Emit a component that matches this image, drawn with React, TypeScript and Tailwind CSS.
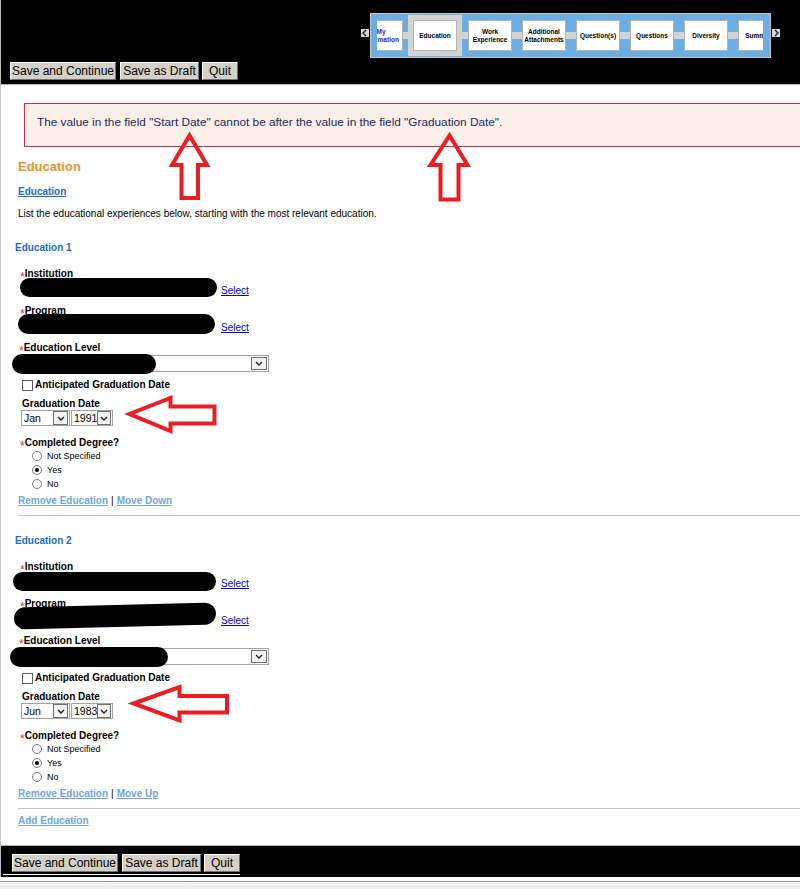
import React from 'react'

type Step = { label: string; active?: boolean; blue?: boolean }

const steps: Step[] = [
  { label: 'My Information', blue: true },
  { label: 'Education', active: true },
  { label: 'Work Experience' },
  { label: 'Additional Attachments' },
  { label: 'Question(s)' },
  { label: 'Questions' },
  { label: 'Diversity' },
  { label: 'Summary' },
]

type EducationEntry = {
  title: string
  month: string
  year: string
  moveLabel: string
  institutionBlob: string
  programBlob: string
  levelBlob: string
}

// the black marker strokes are the redacted answers
const entries: EducationEntry[] = [
  {
    title: 'Education 1',
    month: 'Jan',
    year: '1991',
    moveLabel: 'Move Down',
    institutionBlob: 'ml-[19px] -mt-[2px] h-[19px] w-[197px]',
    programBlob: 'ml-[17px] -mt-[3px] h-[20px] w-[197px]',
    levelBlob: 'left-[-9px] top-[-2px] h-[20px] w-[144px]',
  },
  {
    title: 'Education 2',
    month: 'Jun',
    year: '1983',
    moveLabel: 'Move Up',
    institutionBlob: 'ml-[12px] -mt-[1px] h-[19px] w-[203px]',
    programBlob: 'ml-[13px] -mt-[5px] h-[22px] w-[202px] rotate-[-1.5deg]',
    levelBlob: 'left-[-11px] top-[-2px] h-[20px] w-[158px]',
  },
]

function Chevron({ dir }: { dir: 'left' | 'right' | 'down' }) {
  const points = dir === 'left' ? '5,1 2,4 5,7' : dir === 'right' ? '3,1 6,4 3,7' : '1,2 4,5 7,2'
  return (
    <svg width="8" height={dir === 'down' ? 7 : 8} viewBox={dir === 'down' ? '0 0 8 7' : '0 0 8 8'}>
      <polyline points={points} fill="none" stroke="#222" strokeWidth="1.4" />
    </svg>
  )
}

function StepTrail() {
  const activeIndex = steps.findIndex((s) => s.active)
  return (
    <div className="flex items-start justify-end pr-[20px] pt-[13px]">
      <div className="mr-px mt-[16px] flex h-[8px] w-[8px] items-center justify-center bg-[#d6d6d6]">
        <Chevron dir="left" />
      </div>
      <div className="h-[45px] w-[401px] border border-[#c6c6c6] bg-[#6aaee4] pl-[6px] pr-[7px]">
        <div className="h-full overflow-hidden">
          <div className="-ml-[18px] flex h-full items-center">
            {steps.map((s, i) => {
              const box = (
                <div
                  className={`flex h-[31px] w-[44px] shrink-0 items-center justify-center border border-[#b4b4b4] bg-white text-center text-[6.5px] font-bold leading-[8px] ${
                    s.blue ? 'text-[#2424ff]' : 'text-black'
                  }`}
                >
                  {s.label}
                </div>
              )
              const gap = i === activeIndex ? 'w-[5px]' : i === activeIndex + 1 ? 'w-[6px]' : 'w-[10px]'
              return (
                <React.Fragment key={s.label}>
                  {i > 0 && <div className={`h-[7px] shrink-0 bg-[#d3d3cf] ${gap}`} />}
                  {s.active ? <div className="shrink-0 bg-[#d3d3cf] p-[5px]">{box}</div> : box}
                </React.Fragment>
              )
            })}
          </div>
        </div>
      </div>
      <div className="ml-px mt-[16px] flex h-[8px] w-[8px] items-center justify-center bg-[#d6d6d6]">
        <Chevron dir="right" />
      </div>
    </div>
  )
}

function FormButtons() {
  const btn =
    'h-[18px] border border-t-white border-l-white border-r-[#6f6f6f] border-b-[#6f6f6f] bg-[#d4d0c8] text-[12px] leading-none text-black'
  return (
    <div className="flex">
      <button className={`${btn} mr-[4px] w-[106px]`}>Save and Continue</button>
      <button className={`${btn} mr-[3px] w-[79px]`}>Save as Draft</button>
      <button className={`${btn} w-[36px]`}>Quit</button>
    </div>
  )
}

function FieldLabel({ text, required, className = '' }: { text: string; required?: boolean; className?: string }) {
  return (
    <div className={`flex h-[12px] items-center text-[10px] font-bold leading-[12px] text-black ${className}`}>
      {required && <span className="relative top-[3px] text-[12px] font-normal leading-none text-[#e2322b]">*</span>}
      {text}
    </div>
  )
}

function Dropdown({ value, className }: { value: string; className: string }) {
  return (
    <div className={`flex h-[16px] items-center justify-between border border-[#a3a3a3] bg-white pl-[2px] pr-px ${className}`}>
      <span className="text-[10.5px] leading-none text-black">{value}</span>
      <span className="flex h-[14px] w-[15px] items-center justify-center border border-[#707070] bg-[#f2f2f2]">
        <Chevron dir="down" />
      </span>
    </div>
  )
}

function Radio({ label, checked }: { label: string; checked?: boolean }) {
  return (
    <div className="ml-[31px] flex h-[14px] items-center gap-[5px] text-[9px] leading-none text-black">
      <span className="flex h-[10px] w-[10px] items-center justify-center rounded-full border border-[#7a7a7a] bg-white">
        {checked && <span className="h-[4px] w-[4px] rounded-full bg-black" />}
      </span>
      {label}
    </div>
  )
}

const actionLink = 'font-bold text-[#6ea6e6] underline'

function EducationBlock({ e }: { e: EducationEntry }) {
  return (
    <section>
      <h3 className="ml-[14px] h-[16px] text-[10px] font-bold leading-[17px] text-[#1b6bcf]">{e.title}</h3>

      <FieldLabel className="ml-[19px] mt-[13px]" text="Institution" required />
      <div className="flex h-[20px]">
        <div className="w-[220px] shrink-0">
          <div className={`relative rounded-full bg-black ${e.institutionBlob}`} />
        </div>
        <a className="mt-[5px] text-[10px] leading-[12px] text-[#0000ee] underline">Select</a>
      </div>

      <FieldLabel className="ml-[19px] mt-[5px]" text="Program" required />
      <div className="flex h-[20px]">
        <div className="w-[220px] shrink-0">
          <div className={`relative rounded-full bg-black ${e.programBlob}`} />
        </div>
        <a className="mt-[5px] text-[10px] leading-[12px] text-[#0000ee] underline">Select</a>
      </div>

      <FieldLabel className="ml-[18px] mt-[5px]" text="Education Level" required />
      <div className="relative ml-[19px] mt-px flex h-[17px] w-[249px] items-center justify-end border border-[#a3a3a3] bg-white pr-px">
        <span className="flex h-[13px] w-[16px] items-center justify-center border border-[#707070] bg-[#f2f2f2]">
          <Chevron dir="down" />
        </span>
        <div className={`absolute rounded-full bg-black ${e.levelBlob}`} />
      </div>

      <div className="ml-[21px] mt-[6px] flex h-[14px] items-center gap-[2px] text-[10px] font-bold leading-none text-black">
        <span className="h-[11px] w-[11px] border border-[#5f5f5f] bg-white" />
        Anticipated Graduation Date
      </div>

      <FieldLabel className="ml-[21px] mt-[6px]" text="Graduation Date" />
      <div className="ml-[20px] flex gap-px">
        <Dropdown value={e.month} className="w-[49px]" />
        <Dropdown value={e.year} className="w-[42px]" />
      </div>

      <FieldLabel className="ml-[19px] mt-[11px]" text="Completed Degree?" required />
      <Radio label="Not Specified" />
      <Radio label="Yes" checked />
      <Radio label="No" />

      <div className="ml-[17px] mt-[3px] flex h-[14px] items-center gap-[3px] text-[10px] leading-none">
        <a className={actionLink}>Remove Education</a>
        <span className="text-black">|</span>
        <a className={actionLink}>{e.moveLabel}</a>
      </div>

      <div className="ml-[17px] mt-[7px] h-px bg-[#c2c2c2]" />
    </section>
  )
}

// hand-drawn callout arrows laid over the form
function Callouts() {
  const stroke = { fill: 'none', stroke: '#ed1c24', strokeWidth: 4, strokeLinejoin: 'miter' as const }
  return (
    <svg className="pointer-events-none absolute left-0 top-0" width="800" height="889">
      <polygon points="189.5,135.5 172,165 181.5,165 181.5,198 198,198 198,165 207,165" {...stroke} />
      <polygon points="449.5,135.5 430.5,165 440.5,165 440.5,199.5 458.5,199.5 458.5,165 467.5,165" {...stroke} />
      <polygon points="129.5,414 170.5,398 170.5,406.5 214.5,406.5 214.5,423.5 170.5,423.5 170.5,431" {...stroke} />
      <polygon points="133.5,703.5 179.5,687 179.5,696 227,696 227,712.5 179.5,712.5 179.5,720.5" {...stroke} />
    </svg>
  )
}

export default function App() {
  return (
    <div className="relative h-[889px] w-[800px] overflow-hidden bg-white font-['Liberation_Sans',Arial,sans-serif]">
      <header className="h-[84px] border-l border-[#bdbdbd] bg-black">
        <StepTrail />
        <div className="mt-[4px] pl-[9px]">
          <FormButtons />
        </div>
      </header>

      <main className="h-[762px] border-y border-l border-y-[#b0b0b0] border-l-[#c4c4c4]">
        <div className="ml-[23px] mt-[18px] h-[44px] w-[790px] border border-[#d5264b] bg-[#fbefea] pl-[12px] pt-[12px] text-[11.8px] leading-[12px] text-[#1d2a5c]">
          The value in the field "Start Date" cannot be after the value in the field "Graduation Date".
        </div>

        <h2 className="ml-[17px] mt-[10px] h-[18px] text-[13px] font-bold leading-[19px] text-[#f7941d]">Education</h2>
        <a className="ml-[17px] mt-[7px] block h-[18px] w-fit text-[10px] font-bold leading-[19px] text-[#1b6bcf] underline">
          Education
        </a>
        <p className="ml-[17px] mt-[5px] h-[16px] text-[10px] leading-[17px] text-black">
          List the educational experiences below, starting with the most relevant education.
        </p>

        <div className="mt-[18px]">
          <EducationBlock e={entries[0]} />
        </div>
        <div className="mt-[16px]">
          <EducationBlock e={entries[1]} />
        </div>

        <div className="ml-[17px] mt-[5px] flex h-[14px] items-center text-[10px] leading-none">
          <a className={actionLink}>Add Education</a>
        </div>
      </main>

      <footer className="h-[31px] border-l border-[#bdbdbd] bg-black">
        <div className="ml-[2px] w-[237px] border-b border-white pb-[2px] pl-[9px] pt-[8px]">
          <FormButtons />
        </div>
      </footer>
      <div className="h-[4px] bg-white" />
      <div className="h-px bg-[#a0a0a0]" />
      <div className="h-[7px] bg-[#f0f0f0]" />

      <Callouts />
    </div>
  )
}
